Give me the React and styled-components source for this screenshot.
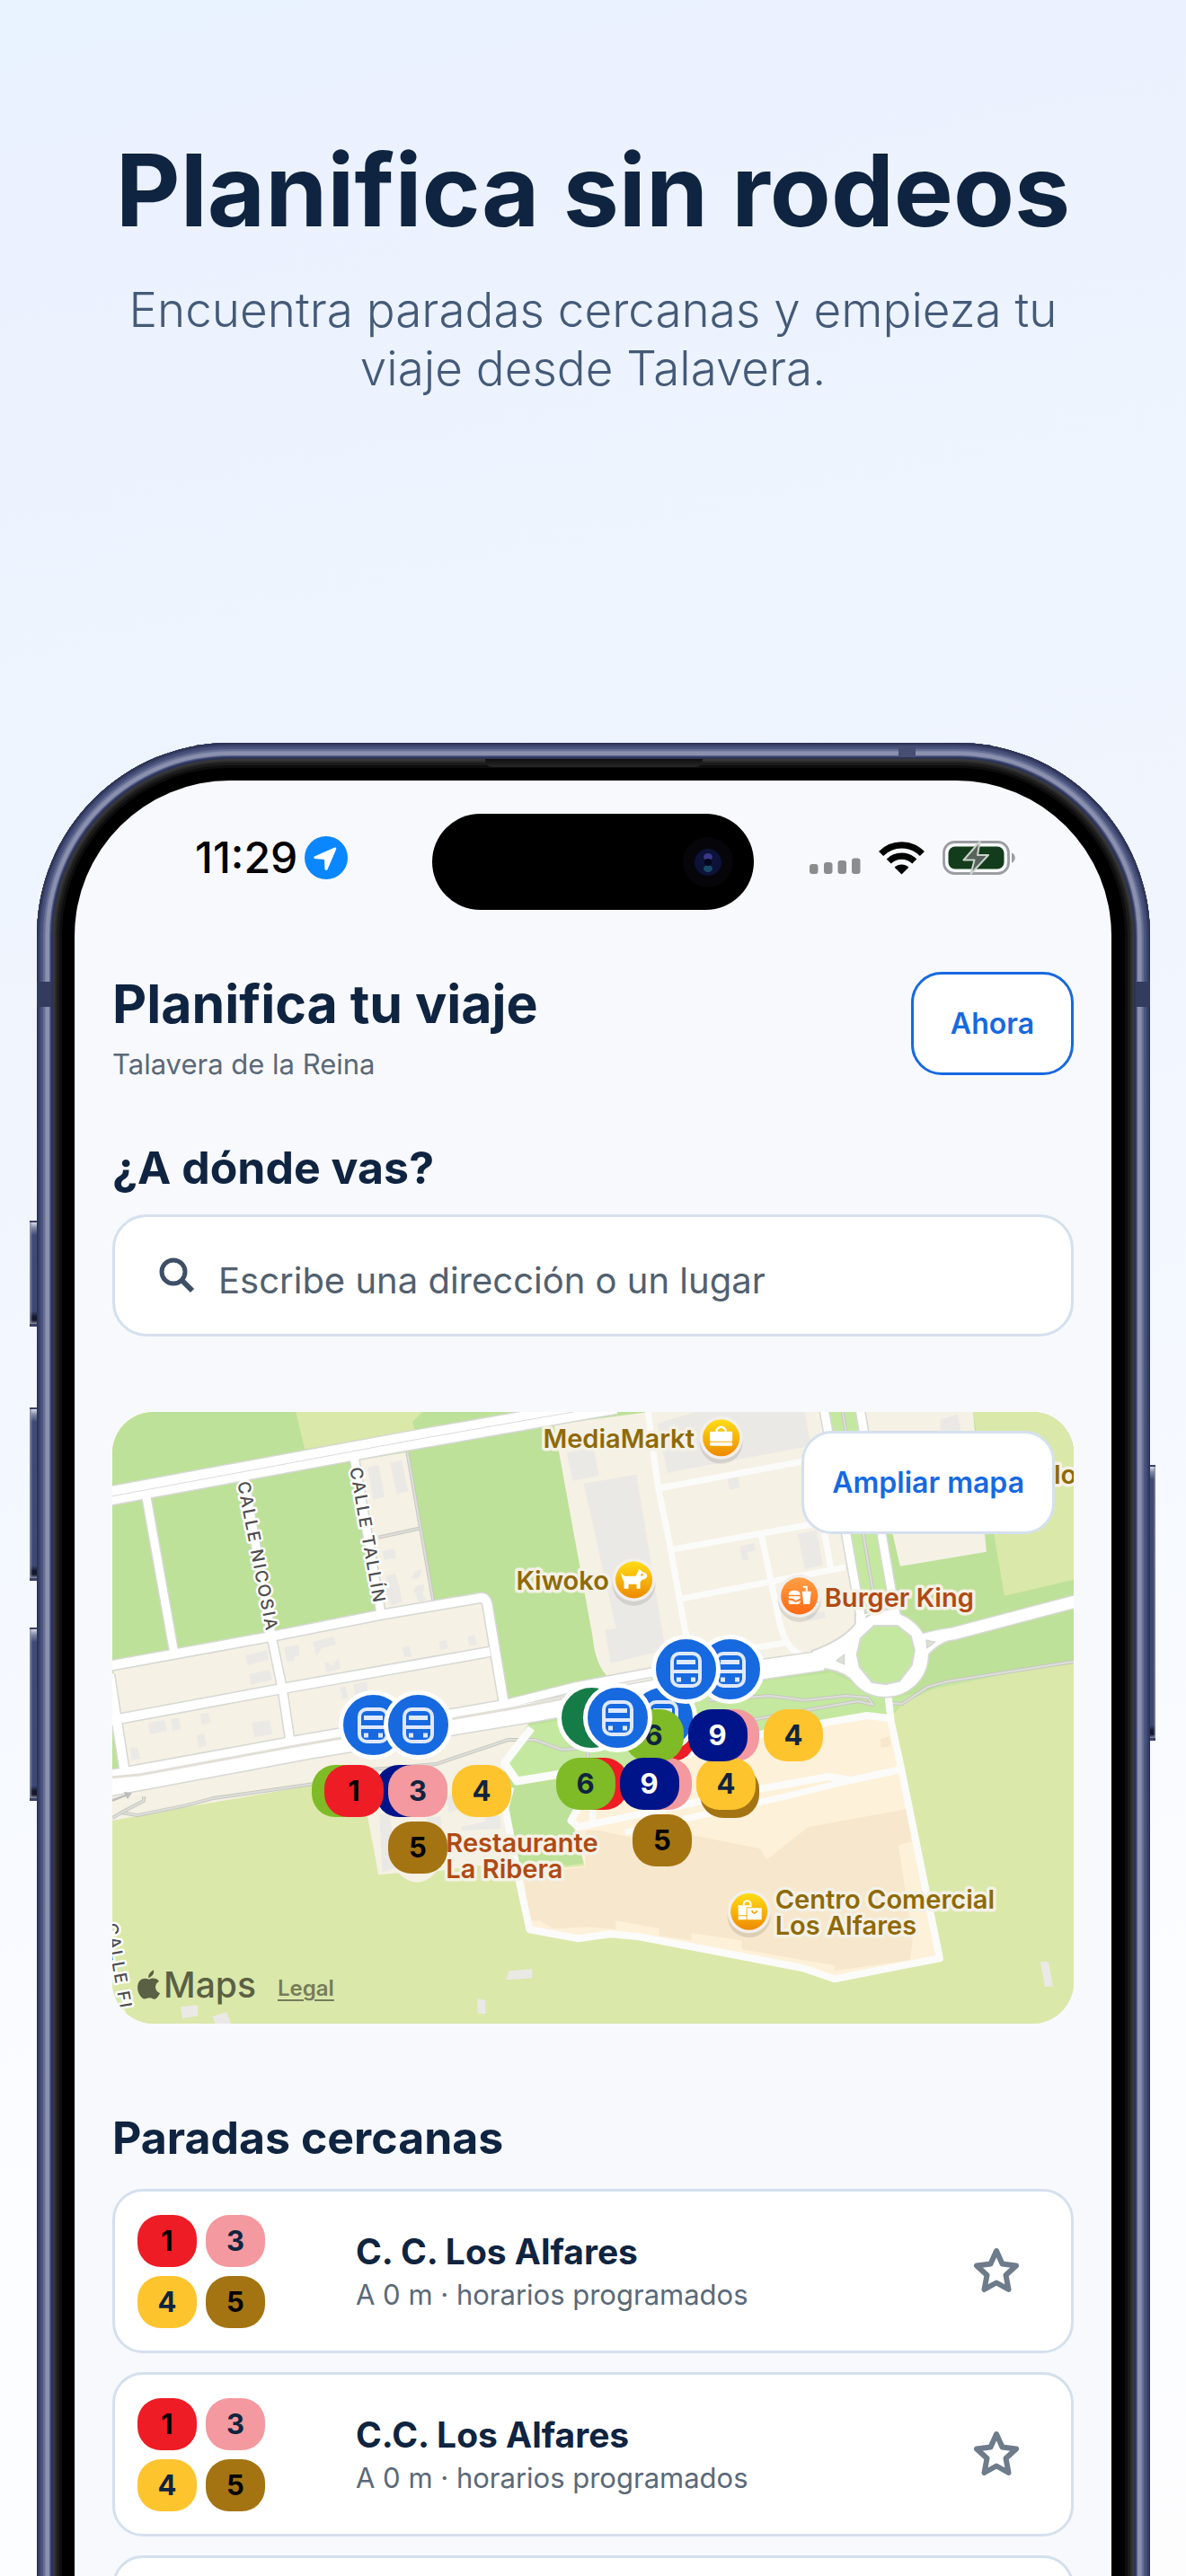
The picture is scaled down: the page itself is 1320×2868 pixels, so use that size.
import React from "react";
import styled, { createGlobalStyle } from "styled-components";

const ink = "#0f2440";
const muted = "#5a6978";
const blue = "#1769e0";
const line = "#d5e0ee";

const LINES = {
  1: { bg: "#ee1c25", fg: "#000000" },
  3: { bg: "#f3999f", fg: ink },
  4: { bg: "#fdc42e", fg: ink },
  5: { bg: "#a47413", fg: "#000000" },
  6: { bg: "#7fbb26", fg: ink },
  9: { bg: "#001489", fg: "#ffffff" },
};

const GlobalStyle = createGlobalStyle`
  * { box-sizing: border-box; }
  body { margin: 0; font-family: Inter, "Liberation Sans", sans-serif; color: ${ink}; }
  h1, h2, h3, p, ul { margin: 0; padding: 0; }
  button, input { font: inherit; color: inherit; margin: 0; }
`;

const Page = styled.main`
  height: 100vh;
  overflow: hidden;
  background: linear-gradient(168deg, #e8f3ff 0%, #ebf1fe 7%, #edf4fe 22%, #f1f5fe 42%, #f4f8ff 55%, #fcfdff 82%, #fdfdfe 100%);
`;

const Hero = styled.header`
  padding: 148px 80px 384px;
  text-align: center;
`;

const HeroTitle = styled.h1`
  font-size: 111px;
  line-height: 128px;
  font-weight: 700;
  white-space: nowrap;
  display: flex;
  justify-content: center;
`;

const HeroText = styled.p`
  margin-top: 37px;
  font-size: 53px;
  line-height: 65px;
  font-weight: 300;
  color: #445a78;
`;

const Phone = styled.section`
  position: relative;
  margin: 0 40px 0 41px;
  padding: 42px 43px 0 42px;
  border-radius: 215px 215px 0 0;
  background: #000;
  box-shadow:
    inset 0 0 0 1px #2b3050, inset 0 0 0 3px #343b60, inset 0 0 0 5px #434c75,
    inset 0 0 0 7px #4d567f, inset 0 0 0 9px #666e93, inset 0 0 0 10px #7d84a6,
    inset 0 0 0 14px #8b90ae, inset 0 0 0 15px #5a638b, inset 0 0 0 16px #3d4672,
    inset 0 0 0 18px #2c3355, inset 0 0 0 20px #383838, inset 0 0 0 22px #2b2b2b,
    inset 0 0 0 25px #1b1b1b, inset 0 0 0 28px #0d0d0d;
`;

const SideKey = styled.span`
  position: absolute;
  top: ${(p) => p.$top}px;
  ${(p) => p.$side}: -${(p) => p.$depth}px;
  width: ${(p) => p.$depth}px;
  height: ${(p) => p.$height}px;
  border: solid #3a4268;
  border-width: 2px 0 3px;
  background:
    linear-gradient(to ${(p) => p.$side}, transparent 60%, #8d93a8 100%),
    linear-gradient(to bottom, #d9dce8 0, #8088a6 6px, #414a76 14px, #3f4874 calc(100% - 14px), #14182e calc(100% - 8px), #14182e calc(100% - 4px), #8b91a8 100%);
`;

const Band = styled.span`
  position: absolute;
  top: 266px;
  ${(p) => p.$side}: 0;
  width: 16px;
  height: 28px;
  background: #333b5e;
`;

const TopBand = styled.span`
  position: absolute;
  top: 3px;
  right: 261px;
  width: 19px;
  height: 13px;
  background: #474e74;
`;

const Earpiece = styled.span`
  position: absolute;
  top: 18px;
  left: 50%;
  width: 242px;
  height: 9px;
  margin-left: -121px;
  border-radius: 0 0 8px 8px;
  background: linear-gradient(#101010, #262626);
`;

const Screen = styled.div`
  position: relative;
  min-height: 2400px;
  border-radius: 173px 173px 0 0;
  background: #f8f9fd;
`;

const StatusBar = styled.div`
  display: flex;
  align-items: center;
  justify-content: space-between;
  height: 172px;
  padding: 0 106px 0 134px;
`;

const StatusGroup = styled.div`
  display: flex;
  align-items: center;
  gap: ${(p) => p.$gap}px;
`;

const Clock = styled.time`
  font-size: 48px;
  line-height: 56px;
  font-weight: 500;
  color: #000;
`;

const Island = styled.div`
  position: absolute;
  top: 37px;
  left: 50%;
  width: 358px;
  height: 107px;
  margin-left: -179px;
  border-radius: 54px;
  background: #000;
  display: flex;
  align-items: center;
  justify-content: flex-end;
  padding-right: 23px;
`;

const Content = styled.div`
  padding: 41px 42px 0;
`;

const TripHeader = styled.header`
  display: flex;
  align-items: flex-start;
  justify-content: space-between;
`;

const TripTitle = styled.h2`
  font-size: 59px;
  line-height: 72px;
  font-weight: 700;
`;

const City = styled.p`
  margin-top: 11px;
  font-size: 31px;
  line-height: 40px;
  color: ${muted};
`;

const PillButton = styled.button`
  height: 115px;
  padding: 0 ${(p) => p.$pad}px;
  border: 3px solid ${(p) => p.$border};
  border-radius: 34px;
  background: #fff;
  color: ${blue};
  font-size: 32px;
  font-weight: 600;
  white-space: nowrap;
`;

const SectionTitle = styled.h2`
  margin-top: ${(p) => p.$space}px;
  font-size: 50px;
  line-height: 60px;
  font-weight: 700;
`;

const SearchBox = styled.div`
  display: flex;
  align-items: center;
  gap: 26px;
  height: 136px;
  margin-top: 22px;
  padding: 0 49px;
  border: 3px solid ${line};
  border-radius: 38px;
  background: #fff;
`;

const SearchInput = styled.input`
  flex: 1;
  min-width: 0;
  border: 0;
  outline: 0;
  padding: 12px 0 0;
  background: transparent;
  font-size: 40px;
  line-height: 52px;
  &::placeholder { color: #52606f; opacity: 1; }
`;

const MapCard = styled.div`
  position: relative;
  height: 681px;
  margin-top: 84px;
  overflow: hidden;
  border-radius: 46px;
  background: #dae8aa;
`;

const MapDrawing = styled.svg`
  display: block;
  width: 100%;
  height: 100%;
  text { font-family: Inter, "Liberation Sans", sans-serif; }
`;

const ExpandSlot = styled.div`
  position: absolute;
  top: 21px;
  right: 21px;
`;

const LegalLink = styled.a`
  position: absolute;
  left: 184px;
  bottom: 25px;
  font-size: 24px;
  line-height: 28px;
  font-weight: 600;
  color: #757d5b;
  text-underline-offset: 4px;
`;

const StopMarker = styled.button`
  position: absolute;
  left: ${(p) => p.$x - 104}px;
  top: ${(p) => p.$y - 39}px;
  width: 208px;
  padding: 0;
  border: 0;
  background: transparent;
  display: flex;
  flex-direction: column;
  align-items: center;
  gap: 6px;
  pointer-events: none;
`;

const Pin = styled.span`
  display: flex;
  align-items: center;
  justify-content: center;
  width: 77px;
  height: 77px;
  border: 5px solid #fff;
  border-radius: 50%;
  background: ${(p) => p.$color};
`;

const MarkerLines = styled.span`
  display: flex;
  flex-wrap: wrap;
  justify-content: center;
  gap: 5px;
`;

const Badge = styled.span`
  display: flex;
  align-items: center;
  justify-content: center;
  width: 66px;
  height: 58px;
  border-radius: 26px;
  background: ${(p) => p.$bg};
  color: ${(p) => p.$fg};
  font-size: 31px;
  line-height: 38px;
  font-weight: 700;
`;

const StopList = styled.ul`
  display: grid;
  gap: 21px;
  margin-top: 27px;
  list-style: none;
`;

const StopCard = styled.li`
  display: grid;
  grid-template-columns: 218px 1fr 116px;
  align-items: center;
  column-gap: 25px;
  min-height: 183px;
  padding: 0 25px;
  border: 3px solid ${line};
  border-radius: 34px;
  background: #fff;
`;

const LineGrid = styled.div`
  display: grid;
  grid-template-columns: repeat(2, 66px);
  gap: 10px;
`;

const StopName = styled.h3`
  font-size: 39px;
  line-height: 48px;
  font-weight: 700;
`;

const StopNote = styled.p`
  margin-top: 4px;
  font-size: 31px;
  line-height: 40px;
  color: ${muted};
`;

const StarButton = styled.button`
  display: flex;
  align-items: center;
  justify-content: center;
  height: 116px;
  padding: 0;
  border: 0;
  background: transparent;
`;

function LineBadge({ line: n }) {
  return <Badge $bg={LINES[n].bg} $fg={LINES[n].fg}>{n}</Badge>;
}

function BusIcon() {
  return (
    <svg width="35" height="40" viewBox="0 0 35 40" fill="none" stroke="#dfe9fb" aria-hidden="true">
      <rect x="2" y="2" width="31" height="36" rx="8" strokeWidth="4" />
      <path d="M7 11.5h21" strokeWidth="5" />
      <path d="M2 22h31" strokeWidth="4" />
      <path d="M7 31h5M23 31h5" strokeWidth="5" />
    </svg>
  );
}

function Stop({ x, y, lines = [], color = blue, label }) {
  return (
    <StopMarker $x={x} $y={y} aria-label={label}>
      <Pin $color={color}>{lines.length > 0 && <BusIcon />}</Pin>
      {lines.length > 0 && (
        <MarkerLines>{lines.map((n) => <LineBadge key={n} line={n} />)}</MarkerLines>
      )}
    </StopMarker>
  );
}

function StatusIcons() {
  return (
    <StatusGroup $gap={20}>
      <svg width="57" height="38" viewBox="0 0 57 38" fill="#8b8c8e" aria-hidden="true">
        <rect x="0" y="26" width="9.5" height="11" rx="3" />
        <rect x="16" y="24" width="9.5" height="13" rx="3" />
        <rect x="31.500" y="22" width="9.5" height="15" rx="3" />
        <rect x="47" y="19.500" width="9.5" height="17.5" rx="3" />
      </svg>
      <svg width="51" height="38" viewBox="0 0 51 38" aria-hidden="true">
        <g fill="none" stroke="#000" strokeWidth="7.2">
          <path d="M2.600 14.500a32 32 0 0 1 45.800 0" />
          <path d="M11.200 23a20.500 20.500 0 0 1 28.600 0" />
        </g>
        <path d="M25.500 37.500l7.800-7.800a11 11 0 0 0-15.600 0z" fill="#000" />
      </svg>
      <svg width="82" height="38" viewBox="0 0 82 38" aria-hidden="true">
        <rect x="1.500" y="1.500" width="72" height="35" rx="12" fill="none" stroke="#9b9ea1" strokeWidth="2.800" />
        <rect x="6.500" y="6.500" width="62" height="25" rx="7.500" fill="#123c1b" />
        <path d="M77 13.500c5 1.500 5 9.500 0 11z" fill="#9b9ea1" />
        <path d="M41.500 1L23.500 21.500h12l-4 15.500 19.500-21h-12z" fill="#59635c" stroke="#c9d2cb" strokeWidth="2" strokeLinejoin="round" />
      </svg>
    </StatusGroup>
  );
}

const road = { fill: "none", strokeLinejoin: "round", strokeLinecap: "butt" };

const ROADS = [
  { d: "M-10 95L332 32L560 -8", w: 20 },
  { d: "M-5 283L177 250L298 226L410 207Q415 207 417 214L436 328", w: 10 },
  { d: "M37 90L69 270", w: 9 },
  { d: "M146 70L177 250L189 308L198 368", w: 9 },
  { d: "M268 45L299 226", w: 9 },
  { d: "M-5 344L189 308L420 267", w: 10 },
  { d: "M-3 292L5 345L14 402", w: 10 },
  { d: "M-5 404L203 366L439 325L515 306L600 290", w: 9 },
  { d: "M-5 417L225 374L475 333L728 286L790 277", w: 21 },
  { d: "M791 -5L833 232", w: 9 },
  { d: "M831 -5L871 226", w: 9 },
  { d: "M900 254Q915 250 935 247L1075 210", w: 13 },
];

const LANES = [
  "M595 -5L607 85L620 148L630 205L640 260", "M609 85L780 53", "M624 153L774 126L800 122",
  "M633 208L815 173", "M722 138L740 225Q746 262 765 270", "M700 265L748 257", "M792 135L799 175",
];

const PATHS = [
  "M328 45L357 211", "M296 140L341 130", "M812 0L846 201",
  "M0 452L10 446L28 449L82 438L112 430L225 414L290 398L360 392L440 365L470 365L500 376L528 374L530 400",
  "M663 321L731 316L770 321L815 316L840 318L846 326L829 322L737 338L700 345",
  "M1075 277L929 300L907 306L878 325L864 324",
  "M10 446L35 433L35 428",
];

const BUILDINGS = [
  "M606 13L650 0L770 0L777 38L617 68Z", "M524 80L583 70L615 265L554 280L548 243L560 241Z",
  "M505 46L535 38L541 71L512 77Z", "M762 136L783 132L790 171L770 175Z", "M698 150L714 146L715 154L706 157L708 165L700 165Z",
  "M684 75L695 71L698 84L686 87Z", "M770 226L792 222L793 229L775 233Z", "M921 8L940 3L945 30L921 30Z",
  "M284 62L296 59L303 95L290 98Z", "M309 57L322 54L329 89L316 91Z", "M300 155L314 152L315 163L302 165Z",
  "M304 183L315 180L320 198L322 211L311 216L304 203Z", "M336 178L344 175L341 185L333 186Z", "M339 193L347 192L345 203L350 209L341 212L335 198Z",
  "M148 271L172 265L174 276L150 282Z", "M152 292L175 287L178 298L154 304Z", "M191 262L207 259L208 271L202 273L202 277L194 278Z",
  "M223 256L246 250L249 259L233 263L227 272Z", "M236 278L245 282L251 274L254 286L238 290Z", "M322 262L330 260L333 272L325 273Z",
  "M363 256L371 254L374 263L365 265Z", "M395 250L403 248L406 259L397 260Z", "M253 306L259 305L262 318L256 320Z", "M268 303L283 300L284 312L270 315Z",
  "M40 346L58 343L61 355L42 359Z", "M65 342L74 341L76 353L67 355Z", "M98 336L107 335L109 346L99 348Z", "M94 360L102 358L105 371L96 374Z",
  "M155 346L175 343L178 359L158 362Z", "M20 374L28 373L31 386L21 388Z",
  "M297 448L308 446L317 507L300 512Z", "M350 452L365 450L368 474L354 480Z", "M388 462L414 456L415 448L431 450L432 464L389 466Z", "M372 428L384 424L386 442L374 446Z",
  "M441 622L467 620L467 630L438 632Z", "M111 673L127 668L131 677L131 681L115 681Z", "M76 662L95 660L95 672L78 675Z", "M406 653L415 655L415 670L406 669Z",
  "M1032 612L1041 612L1046 639L1037 640Z",
];

function PoiIcon({ x, y, fill, children }) {
  return (
    <g transform={`translate(${x} ${y})`}>
      <circle cy="5" r="24" fill="#000" opacity="0.1" />
      <circle r="24" fill="#f2efec" />
      <circle r="20.5" fill={fill} />
      <g fill="#fff">{children}</g>
    </g>
  );
}

function PoiLabel({ x, y, color, children }) {
  return (
    <text x={x} y={y} fontSize="29" fontWeight="600" fill={color} stroke="#f4f1e6" strokeWidth="7" strokeLinejoin="round" paintOrder="stroke">
      {children}
    </text>
  );
}

function StreetLabel({ x, y, angle, children }) {
  return (
    <text transform={`translate(${x} ${y}) rotate(${angle})`} fontSize="19" fontWeight="500" letterSpacing="2" fill="#4d4d4d" stroke="#fff" strokeWidth="5" strokeLinejoin="round" paintOrder="stroke">
      {children}
    </text>
  );
}

function CityMap() {
  const gold = "#8f6a08";
  const rust = "#b04a14";
  return (
    <MapDrawing viewBox="0 0 1069 681" preserveAspectRatio="xMidYMid slice">
      <defs>
        <linearGradient id="shop" x1="0" y1="0" x2="0" y2="1">
          <stop offset="0" stopColor="#ffdd16" />
          <stop offset="1" stopColor="#ee8a00" />
        </linearGradient>
        <linearGradient id="food" x1="0" y1="0" x2="0" y2="1">
          <stop offset="0" stopColor="#ffa044" />
          <stop offset="1" stopColor="#ff6a16" />
        </linearGradient>
      </defs>
      <rect width="1069" height="681" fill="#dae8aa" />
      <path d="M0 0H1069V280L929 300L878 325L862 345L724 360L600 400L530 500L453 510L440 430L300 395L0 420Z" fill="#bde198" />
      <path d="M461 350L720 300L800 290L860 320L1069 276V217L920 250L860 250L800 280L1069 216V277L929 300L878 325L862 340L835 336L724 358L600 395L493 406L450 411L436 391Z" fill="#c4e8a0" />
      <path d="M204 0H345L334 11L336 20L214 42Z" fill="#dae8aa" />
      <path d="M957 0H1069V187L992 205Z" fill="#dae8aa" />
      <path d="M797 0H829L870 225H836Z" fill="#c4e8a0" />
      <path d="M837 0H957L972 156L876 172L850 60Z" fill="#f6f1e5" />
      <path d="M273 54L328 45L357 211L304 223Z" fill="#f6f1e5" />
      <path d="M0 288L414 210L434 325L300 350L0 402Z" fill="#f6f1e5" />
      <path d="M0 272L10 400L0 404Z" fill="#bde198" />
      <path d="M491 14L600 0H791L830 235L800 268L700 285L552 296Q537 282 534 250Z" fill="#f6f1e5" />
      <path d="M0 402L600 292L600 305L464 345L436 391L437 441L445 500L361 511Q340 535 318 513L296 515L284 451L275 408L225 415L82 440L0 455Z" fill="#f6f1e5" />
      <path d="M443 418L530 400L540 500L453 512L440 440Z" fill="#bde198" />
      <path d="M461 350L600 330L600 395L493 404L450 411L438 391Z" fill="#c4e8a0" />
      {BUILDINGS.map((d) => <path key={d} d={d} fill="#ebe9e6" />)}

      <path d="M510 450L600 395L724 358L839 338L864 341L876 391L920 608L803 630L768 618L586 583L554 581L518 586L464 575L454 512L525 505Z" fill="#fef1d9" />
      <path d="M526 466L540 466L600 478L640 470L720 486L728 498L774 462L884 442L889 478L874 482L890 586L887 610L803 622V616L700 598V588L644 580V588L608 583V575L560 566V576L530 573L490 575L475 566L464 566L457 515L526 506Z" fill="#f7e7cc" />
      <path d="M854 364L864 361L866 372L855 374Z" fill="#f7e7cc" />
      {PATHS.map((d) => (
        <g key={d} {...road}>
          <path d={d} stroke="#c6c7c0" strokeWidth="4" />
          <path d={d} stroke="#dddfd8" strokeWidth="2" />
        </g>
      ))}
      <g {...road} stroke="#fbfbfa">
        <path d="M876 391L920 608L803 631L768 619L586 584L554 581L518 586L464 576L453 525L437 441L443 418" strokeWidth="8" />
        <path d="M864 341L839 338L724 358L600 392L520 436L510 455L518 462L570 451L712 421L797 406L821 410L876 398" strokeWidth="8" />
        <path d="M570 468L748 428L821 410M536 400L534 455" strokeWidth="7" />
        <path d="M466 352L436 391L450 411L530 398" strokeWidth="9" />
        <path d="M862 310L866 345L876 391" strokeWidth="8" />
        {LANES.map((d) => <path key={d} d={d} strokeWidth="7" />)}
      </g>

      <g {...road} stroke="#d6d8d3">
        {ROADS.map((r) => <path key={r.d} d={r.d} strokeWidth={r.w + 3} />)}
        <circle cx="860" cy="270" r="39" strokeWidth="19" />
      </g>
      <path d="M778 266Q812 254 826 236V226L874 218Q882 240 900 248L935 243V253Q908 262 900 284L884 306H836L822 298Q804 284 778 286Z" fill="#fff" stroke="#d6d8d3" strokeWidth="2" />
      <g {...road} stroke="#fff">
        {ROADS.map((r) => <path key={r.d} d={r.d} strokeWidth={r.w} />)}
        <circle cx="860" cy="270" r="39" strokeWidth="16" />
      </g>
      <path d="M847 238H873L888 250L892 265L889 282L875 300L860 303L845 301L831 284L828 270L832 252Z" fill="#c4e8a0" stroke="#d6d8d3" strokeWidth="2" />
      <path d="M805 277L814 270V281Z M905 254L915 256L906 263Z M838 229L848 223L856 222L839 227Z" fill="#dcdfd6" stroke="#cfd1cb" />
      <path d="M0 94L332 32L520 -1" stroke="#dadcd8" strokeWidth="1" fill="none" />
      <path d="M-5 407L30 404L203 372L439 331L560 308" stroke="#e1dfd6" strokeWidth="3" fill="none" />
      <path d="M0 431L14 426L13 423L22 424L17 431L15 428L0 434Z" fill="#bdbdbd" />

      <StreetLabel x={139} y={79} angle={79}>CALLE NICOSIA</StreetLabel>
      <StreetLabel x={264} y={63} angle={80}>CALLE TALLÍN</StreetLabel>
      <StreetLabel x={-8} y={570} angle={80}>CALLE FI.</StreetLabel>

      <PoiLabel x={479} y={40} color={gold}>MediaMarkt</PoiLabel>
      <PoiLabel x={449} y={198} color={gold}>Kiwoko</PoiLabel>
      <PoiLabel x={1047} y={80} color={gold}>lo</PoiLabel>
      <PoiLabel x={792} y={217} color={rust}>Burger King</PoiLabel>
      <PoiLabel x={371} y={490} color={rust}>Restaurante</PoiLabel>
      <PoiLabel x={371} y={519} color={rust}>La Ribera</PoiLabel>
      <PoiLabel x={737} y={553} color={gold}>Centro Comercial</PoiLabel>
      <PoiLabel x={737} y={582} color={gold}>Los Alfares</PoiLabel>

      <PoiIcon x={677} y={29} fill="url(#shop)">
        <rect x="-12.500" y="-7" width="25" height="11" rx="1" />
        <rect x="-12.500" y="5" width="25" height="4" rx="1" />
        <path d="M-5 -6V-9Q0 -15 5 -9V-6" fill="none" stroke="#fff" strokeWidth="2.200" />
      </PoiIcon>
      <PoiIcon x={580} y={187} fill="url(#shop)">
        <path d="M-14 -8Q-11 -3 -7 -4H2L6 -12L9 -9Q14 -8 15 -4Q13 0 9 0L7 3V10H3V5H-6V10H-11V2Q-14 -2 -14 -8Z" />
        <circle cx="9" cy="-5.500" r="1.300" fill="#f6a800" />
      </PoiIcon>
      <PoiIcon x={764} y={205} fill="url(#food)">
        <path d="M-12 -1Q-12 -6 -5.500 -6Q1 -6 1 -1ZM-12 .5H1V2.500L-4 5L-8 2.500H-12ZM-12 4.500L-8 5L-4 7L1 5V7Q0 9 -2 9H-10Q-12 9 -12 7Z" />
        <path d="M3 -5H13L11.500 9H4.500Z" />
        <path d="M8 -5V-10H4" fill="none" stroke="#fff" strokeWidth="2" />
      </PoiIcon>
      <PoiIcon x={708} y={556} fill="url(#shop)">
        <path d="M-12 -7H3V-5H-3V4H-12ZM-12 5H-3V9H-12ZM-2 -4H14V9H-2Z" />
        <path d="M-6 -7Q-6 -12 -2 -12Q2 -12 2 -7" fill="none" stroke="#fff" strokeWidth="2" />
        <path d="M3 -1Q6 5 9 -1" fill="none" stroke="#f6a000" strokeWidth="1.800" />
      </PoiIcon>

      <g fill="#5a6044">
        <path d="M46 621Q47 626 42 629Q41 630 40 629.500Q40 624 46 621Z" />
        <path d="M41 631.500Q45 629 49 631Q51 632 52 633.500Q48 636 48 640.500Q48.500 645 53 647Q51 651 48.500 653Q46 654 44 652.500Q41 651.500 38 652.800Q35 654 33 652Q28 647 28 640Q28.500 631 36 630.500Q38 630.500 41 631.500Z" />
        <text x="57" y="652" fontSize="39" fontWeight="500">Maps</text>
      </g>
    </MapDrawing>
  );
}

const NEARBY = [
  { name: "C. C. Los Alfares", note: "A 0 m · horarios programados", lines: [1, 3, 4, 5] },
  { name: "C.C. Los Alfares", note: "A 0 m · horarios programados", lines: [1, 3, 4, 5] },
];

export default function App() {
  return (
    <Page>
      <GlobalStyle />
      <Hero>
        <HeroTitle>Planifica sin rodeos</HeroTitle>
        <HeroText>Encuentra paradas cercanas y empieza tu<br />viaje desde Talavera.</HeroText>
      </Hero>
      <Phone>
        <SideKey $side="left" $depth={8} $top={532} $height={118} />
        <SideKey $side="left" $depth={8} $top={740} $height={193} />
        <SideKey $side="left" $depth={8} $top={985} $height={193} />
        <SideKey $side="right" $depth={6} $top={804} $height={307} />
        <Band $side="left" />
        <Band $side="right" />
        <TopBand />
        <Earpiece />
        <Screen>
          <StatusBar>
            <StatusGroup $gap={8}>
              <Clock>11:29</Clock>
              <svg width="48" height="48" viewBox="0 0 48 48" aria-hidden="true">
                <circle cx="24" cy="24" r="24" fill="#0a87ff" />
                <path d="M33.500 12.500Q36 12 35 15L25.500 37Q24 39 22.500 37L22 26L11.500 25Q9 24 11 22.500Z" fill="#fff" />
              </svg>
            </StatusGroup>
            <StatusIcons />
          </StatusBar>
          <Island>
            <svg width="56" height="56" viewBox="0 0 56 56" aria-hidden="true">
              <circle cx="28" cy="28" r="28" fill="#060509" />
              <circle cx="28" cy="28" r="15" fill="#0c1238" />
              <ellipse cx="28" cy="22" rx="5" ry="4" fill="#3a3688" />
              <ellipse cx="28" cy="35" rx="5" ry="4" fill="#174a68" />
              <circle cx="28" cy="28" r="4" fill="#05061a" />
            </svg>
          </Island>
          <Content>
            <TripHeader>
              <div>
                <TripTitle>Planifica tu viaje</TripTitle>
                <City>Talavera de la Reina</City>
              </div>
              <PillButton $pad={41} $border={blue}>Ahora</PillButton>
            </TripHeader>

            <SectionTitle $space={65}><label htmlFor="destino">¿A dónde vas?</label></SectionTitle>
            <SearchBox>
              <svg width="40" height="40" viewBox="0 0 40 40" fill="none" stroke="#3d4f66" strokeWidth="5" aria-hidden="true">
                <circle cx="16" cy="16" r="13" />
                <path d="M25.500 25.500L37 37" strokeWidth="6" />
              </svg>
              <SearchInput id="destino" type="text" placeholder="Escribe una dirección o un lugar" />
            </SearchBox>

            <MapCard>
              <CityMap />
              <LegalLink href="#legal">Legal</LegalLink>
              <Stop x={290} y={349} lines={[6, 9]} label="Parada, líneas 6 y 9" />
              <Stop x={340} y={349} lines={[1, 3, 4, 5]} label="Parada, líneas 1, 3, 4 y 5" />
              <Stop x={687} y={287} lines={[1, 3, 4, 5]} label="C. C. Los Alfares" />
              <Stop x={612} y={341} lines={[1, 3, 4, 5]} label="C.C. Los Alfares" />
              <Stop x={638} y={287} lines={[6, 9]} label="Parada, líneas 6 y 9" />
              <Stop x={533} y={341} color="#157c48" label="Origen" />
              <Stop x={562} y={341} lines={[6, 9]} label="Parada, líneas 6 y 9" />
              <ExpandSlot>
                <PillButton $pad={31} $border={line}>Ampliar mapa</PillButton>
              </ExpandSlot>
            </MapCard>

            <SectionTitle $space={97}>Paradas cercanas</SectionTitle>
            <StopList>
              {NEARBY.map((s) => (
                <StopCard key={s.name}>
                  <LineGrid>{s.lines.map((n) => <LineBadge key={n} line={n} />)}</LineGrid>
                  <div>
                    <StopName>{s.name}</StopName>
                    <StopNote>{s.note}</StopNote>
                  </div>
                  <StarButton aria-label="Guardar parada">
                    <svg width="54" height="54" viewBox="0 0 54 54" fill="none" stroke="#6d7b8a" strokeWidth="6" strokeLinejoin="round" aria-hidden="true">
                      <path d="M27 4L33.500 18.500L49 20.500L37.500 31L40.500 47L27 39.500L13.500 47L16.500 31L5 20.500L20.500 18.500Z" />
                    </svg>
                  </StarButton>
                </StopCard>
              ))}
              <StopCard />
            </StopList>
          </Content>
        </Screen>
      </Phone>
    </Page>
  );
}
